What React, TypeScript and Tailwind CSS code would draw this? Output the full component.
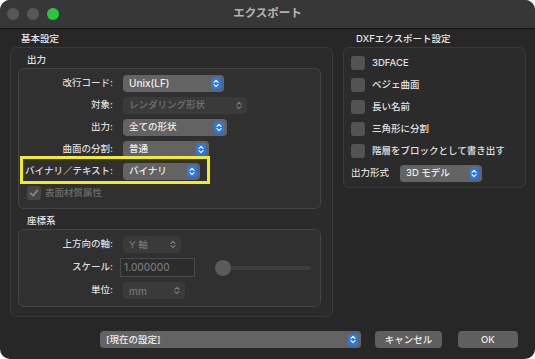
import React from 'react';

const FONT = "font-[Inter,'Noto_Sans_CJK_JP',sans-serif]";

function Arrows({ color }: { color: string }) {
  return (
    <svg width="6" height="9" viewBox="0 0 6 9">
      <path
        d="M1 3.4 L3 1.4 L5 3.4 M1 5.6 L3 7.6 L5 5.6"
        stroke={color}
        strokeWidth="1.2"
        fill="none"
        strokeLinecap="round"
        strokeLinejoin="round"
      />
    </svg>
  );
}

interface PopupProps {
  text: string;
  className: string;
  disabled?: boolean;
}

function Popup({ text, className, disabled = false }: PopupProps) {
  return (
    <div
      className={`flex h-[17px] items-center justify-between rounded-[4px] pl-[6px] pr-[3px] ${
        disabled ? 'bg-[#3a3a3a] text-[#737373]' : 'bg-[#636363] text-[#ededed]'
      } ${className}`}
    >
      <span className="leading-none">{text}</span>
      {disabled ? (
        <div className="flex h-[12px] w-[10px] items-center justify-center">
          <Arrows color="#7a7a7a" />
        </div>
      ) : (
        <div className="flex h-[12px] w-[10px] items-center justify-center rounded-[3px] bg-[#2b78e4]">
          <Arrows color="#ffffff" />
        </div>
      )}
    </div>
  );
}

function Row({ label, children, tall = false }: { label: string; children: React.ReactNode; tall?: boolean }) {
  return (
    <div className={`flex items-center ${tall ? 'h-[23px]' : 'h-[22px]'}`}>
      <div className="w-[94px] text-right text-[#dcdcdc]">{label}</div>
      {children}
    </div>
  );
}

function Check({ label }: { label: string }) {
  return (
    <div className="flex h-[22px] items-center gap-[7px]">
      <div className="h-[14px] w-[14px] rounded-[3px] bg-[#535353]" />
      <span className="text-[#e2e2e2]">{label}</span>
    </div>
  );
}

export default function App() {
  return (
    <div className={`h-[359px] w-[535px] bg-white text-[9.5px] font-medium ${FONT}`}>
      <div className="flex h-full flex-col overflow-hidden rounded-[10px] bg-[#272727]">
        {/* Title bar */}
        <div className="grid h-[29px] grid-cols-[1fr_auto_1fr] items-center border-b border-[#141414] bg-[#373737]">
          <div className="flex items-center gap-[8px] pl-[7px]">
            <div className="h-[12px] w-[12px] rounded-full bg-[#575757]" />
            <div className="h-[12px] w-[12px] rounded-full bg-[#575757]" />
            <div className="h-[12px] w-[12px] rounded-full bg-[#2ac641]" />
          </div>
          <div className="text-[11.5px] font-semibold text-[#b3b3b3]">エクスポート</div>
          <div />
        </div>

        {/* Columns */}
        <div className="flex h-[288px] gap-[10px] pl-[10px]">
          {/* Left: 基本設定 */}
          <div className="flex w-[323px] flex-col">
            <div className="flex h-[18px] items-end pb-[1px] pl-[11px] text-[#e4e4e4]">基本設定</div>
            <div className="rounded-[6px] border border-[#3a3a3a] bg-[#2b2b2b] pb-[9px] pl-[7px] pr-[11px]">
              <div className="flex h-[20px] items-center pl-[9px] pt-[5px] text-[#e4e4e4]">出力</div>
              <div className="rounded-[6px] border border-[#444444] bg-[#303030] pb-[4px] pt-[3px]">
                <Row label="改行コード:">
                  <Popup text="Unix(LF)" className="ml-[10px] w-[101px] text-[10px]" />
                </Row>
                <Row label="対象:">
                  <Popup text="レンダリング形状" className="ml-[10px] w-[124px]" disabled />
                </Row>
                <Row label="出力:">
                  <Popup text="全ての形状" className="ml-[10px] w-[104px]" />
                </Row>
                <Row label="曲面の分割:">
                  <Popup text="普通" className="ml-[10px] w-[86px]" />
                </Row>
                <div className="relative">
                  <Row label="バイナリ／テキスト:">
                    <Popup text="バイナリ" className="ml-[10px] w-[77px]" />
                  </Row>
                  <div className="absolute -top-[4px] left-[1px] h-[28px] w-[190px] border-[3px] border-[#f2ec24]" />
                </div>
                <div className="flex h-[22px] items-center gap-[4px] pl-[8px]">
                  <div className="flex h-[14px] w-[14px] items-center justify-center rounded-[3px] bg-[#474747]">
                    <svg width="10" height="10" viewBox="0 0 10 10">
                      <path
                        d="M1.8 5.4 L4 7.6 L8.4 2.4"
                        stroke="#858585"
                        strokeWidth="1.8"
                        fill="none"
                        strokeLinecap="round"
                        strokeLinejoin="round"
                      />
                    </svg>
                  </div>
                  <span className="text-[#6c6c6c]">表面材質属性</span>
                </div>
              </div>

              <div className="flex h-[20px] items-center pl-[9px] pt-[5px] text-[#e4e4e4]">座標系</div>
              <div className="rounded-[6px] border border-[#444444] bg-[#303030] pb-[4px] pt-[3px]">
                <Row label="上方向の軸:" tall>
                  <Popup text="Y 軸" className="ml-[10px] w-[58px]" disabled />
                </Row>
                <Row label="スケール:" tall>
                  <div className="ml-[7px] flex h-[19px] w-[75px] items-center border border-[#4a4a4a] bg-[#2c2c2c] pl-[3px] text-[10px] text-[#767676]">
                    1.000000
                  </div>
                  <div className="relative ml-[20px] flex h-[16px] w-[96px] items-center">
                    <div className="h-[4px] w-full rounded-full bg-[#3e3e3e]" />
                    <div className="absolute left-0 top-0 h-[16px] w-[16px] rounded-full bg-[#5a5a5a]" />
                  </div>
                </Row>
                <Row label="単位:" tall>
                  <Popup text="mm" className="ml-[10px] w-[62px] text-[10px]" disabled />
                </Row>
              </div>
            </div>
          </div>

          {/* Right: DXF */}
          <div className="flex w-[183px] flex-col">
            <div className="flex h-[18px] items-end pb-[1px] pl-[13px] text-[#e4e4e4]">DXFエクスポート設定</div>
            <div className="rounded-[6px] border border-[#3a3a3a] bg-[#2b2b2b] pb-[3px] pl-[7px] pt-[4px]">
              <Check label="3DFACE" />
              <Check label="ベジェ曲面" />
              <Check label="長い名前" />
              <Check label="三角形に分割" />
              <Check label="階層をブロックとして書き出す" />
              <div className="flex h-[22px] items-center">
                <span className="text-[#dcdcdc]">出力形式</span>
                <Popup text="3D モデル" className="ml-[11px] w-[82px]" />
              </div>
            </div>
          </div>
        </div>

        {/* Bottom buttons */}
        <div className="flex h-[42px] items-start justify-end pr-[17px] pt-[14px]">
          <Popup text="[現在の設定]" className="w-[261px]" />
          <button className="ml-[14px] h-[17px] w-[67px] rounded-[4px] bg-[#5f5f5f] leading-none text-[#ececec]">
            キャンセル
          </button>
          <button className="ml-[16px] h-[17px] w-[60px] rounded-[4px] bg-[#5f5f5f] leading-none text-[#ececec]">
            OK
          </button>
        </div>
      </div>
    </div>
  );
}
